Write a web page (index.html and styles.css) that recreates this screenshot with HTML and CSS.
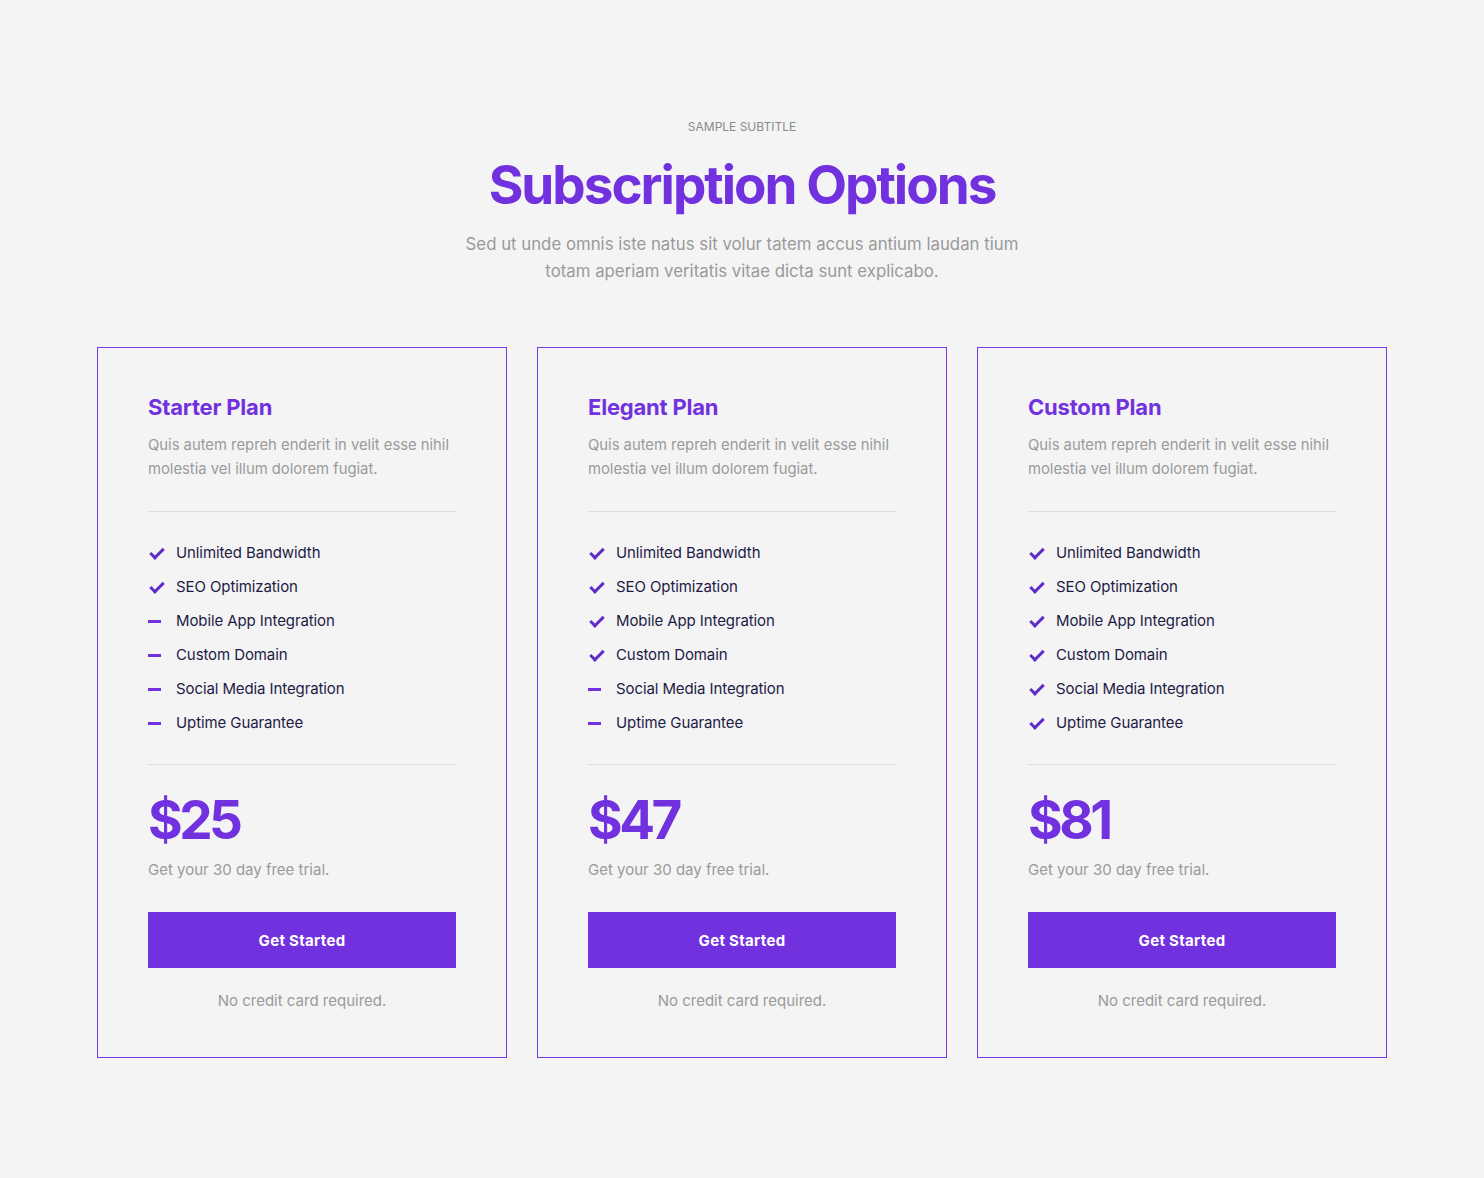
FILE: index.html
```html
<!DOCTYPE html>
<html lang="en">
<head>
<meta charset="utf-8">
<title>Subscription Options</title>
<link rel="stylesheet" href="styles.css">
</head>
<body>
<section class="pricing">
  <header class="intro">
    <p class="subtitle">SAMPLE SUBTITLE</p>
    <h1 class="heading">Subscription Options</h1>
    <p class="lead">Sed ut unde omnis iste natus sit volur tatem accus antium laudan tium totam aperiam veritatis vitae dicta sunt explicabo.</p>
  </header>

  <div class="plans">
    <article class="plan">
      <h2 class="plan-title">Starter Plan</h2>
      <p class="plan-desc">Quis autem repreh enderit in velit esse nihil molestia vel illum dolorem fugiat.</p>
      <hr class="rule">
      <ul class="features">
        <li class="feature yes"><span class="ico"></span>Unlimited Bandwidth</li>
        <li class="feature yes"><span class="ico"></span>SEO Optimization</li>
        <li class="feature no"><span class="ico"></span>Mobile App Integration</li>
        <li class="feature no"><span class="ico"></span>Custom Domain</li>
        <li class="feature no"><span class="ico"></span>Social Media Integration</li>
        <li class="feature no"><span class="ico"></span>Uptime Guarantee</li>
      </ul>
      <hr class="rule rule-bottom">
      <p class="price">$25</p>
      <p class="trial">Get your 30 day free trial.</p>
      <a class="btn" href="#">Get Started</a>
      <p class="note">No credit card required.</p>
    </article>

    <article class="plan">
      <h2 class="plan-title">Elegant Plan</h2>
      <p class="plan-desc">Quis autem repreh enderit in velit esse nihil molestia vel illum dolorem fugiat.</p>
      <hr class="rule">
      <ul class="features">
        <li class="feature yes"><span class="ico"></span>Unlimited Bandwidth</li>
        <li class="feature yes"><span class="ico"></span>SEO Optimization</li>
        <li class="feature yes"><span class="ico"></span>Mobile App Integration</li>
        <li class="feature yes"><span class="ico"></span>Custom Domain</li>
        <li class="feature no"><span class="ico"></span>Social Media Integration</li>
        <li class="feature no"><span class="ico"></span>Uptime Guarantee</li>
      </ul>
      <hr class="rule rule-bottom">
      <p class="price">$47</p>
      <p class="trial">Get your 30 day free trial.</p>
      <a class="btn" href="#">Get Started</a>
      <p class="note">No credit card required.</p>
    </article>

    <article class="plan">
      <h2 class="plan-title">Custom Plan</h2>
      <p class="plan-desc">Quis autem repreh enderit in velit esse nihil molestia vel illum dolorem fugiat.</p>
      <hr class="rule">
      <ul class="features">
        <li class="feature yes"><span class="ico"></span>Unlimited Bandwidth</li>
        <li class="feature yes"><span class="ico"></span>SEO Optimization</li>
        <li class="feature yes"><span class="ico"></span>Mobile App Integration</li>
        <li class="feature yes"><span class="ico"></span>Custom Domain</li>
        <li class="feature yes"><span class="ico"></span>Social Media Integration</li>
        <li class="feature yes"><span class="ico"></span>Uptime Guarantee</li>
      </ul>
      <hr class="rule rule-bottom">
      <p class="price">$81</p>
      <p class="trial">Get your 30 day free trial.</p>
      <a class="btn" href="#">Get Started</a>
      <p class="note">No credit card required.</p>
    </article>
  </div>
</section>
</body>
</html>
```

FILE: styles.css
```css
* { box-sizing: border-box; }

html, body {
  margin: 0;
  padding: 0;
  background: #f4f4f4;
  font-family: Inter, "Noto Sans", "Liberation Sans", sans-serif;
}

.pricing {
  padding: 117px 0 120px;
}

.intro {
  text-align: center;
  display: flex;
  flex-direction: column;
  align-items: center;
}

.subtitle {
  margin: 0;
  font-size: 12px;
  line-height: 20px;
  color: #8a8a8a;
  letter-spacing: 0;
}

.heading {
  margin: 15px 0 0;
  font-size: 53px;
  line-height: 66px;
  font-weight: 700;
  color: #7231df;
  letter-spacing: -2px;
}

.lead {
  margin: 13px 0 0;
  max-width: 562px;
  font-size: 16.8px;
  line-height: 27px;
  color: #9a9a9a;
  letter-spacing: 0;
}

.plans {
  margin-top: 62px;
  display: flex;
  justify-content: center;
  gap: 30px;
}

.plan {
  width: 410px;
  border: 1px solid #7437e0;
  padding: 45px 50px 44px;
  display: flex;
  flex-direction: column;
}

.plan-title {
  margin: 0;
  font-size: 22px;
  line-height: 28px;
  font-weight: 700;
  color: #7231df;
  letter-spacing: -0.2px;
}

.plan-desc {
  margin: 12px 0 0;
  font-size: 14.8px;
  line-height: 24px;
  color: #9a9a9a;
  letter-spacing: 0;
}

.rule {
  margin: 30px 0 0;
  border: 0;
  border-top: 1px solid #dcdcdc;
  height: 0;
}

.rule-bottom {
  margin-top: 29px;
}

.features {
  list-style: none;
  margin: 29px 0 0;
  padding: 0;
  display: flex;
  flex-direction: column;
  gap: 10px;
}

.feature {
  display: flex;
  align-items: center;
  font-size: 15px;
  line-height: 24px;
  color: #1d1b45;
  letter-spacing: -0.1px;
}

.ico {
  width: 14px;
  height: 12px;
  margin-right: 14px;
  flex: none;
  position: relative;
}

.feature.yes .ico::before {
  content: "";
  position: absolute;
  left: 2px;
  top: -2px;
  width: 5px;
  height: 11px;
  border-right: 3px solid #5f2cc8;
  border-bottom: 3px solid #5f2cc8;
  transform: translate(3px, 0) rotate(45deg);
  transform-origin: center;
}

.feature.no .ico::before {
  content: "";
  position: absolute;
  left: 0;
  top: 5px;
  width: 13px;
  height: 3px;
  background: #7231df;
}

.price {
  margin: 27px 0 0;
  font-size: 53px;
  line-height: 56px;
  font-weight: 700;
  color: #7231df;
  letter-spacing: -3.5px;
}

.trial {
  margin: 10px 0 0;
  font-size: 15px;
  line-height: 24px;
  color: #9a9a9a;
  letter-spacing: 0;
}

.btn {
  margin-top: 30px;
  height: 56px;
  display: flex;
  align-items: center;
  justify-content: center;
  background: #7231df;
  color: #ffffff;
  font-size: 15px;
  font-weight: 700;
  text-decoration: none;
  letter-spacing: 0.3px;
}

.note {
  margin: 21px 0 0;
  text-align: center;
  font-size: 15px;
  line-height: 24px;
  color: #9a9a9a;
  letter-spacing: 0;
}
```
